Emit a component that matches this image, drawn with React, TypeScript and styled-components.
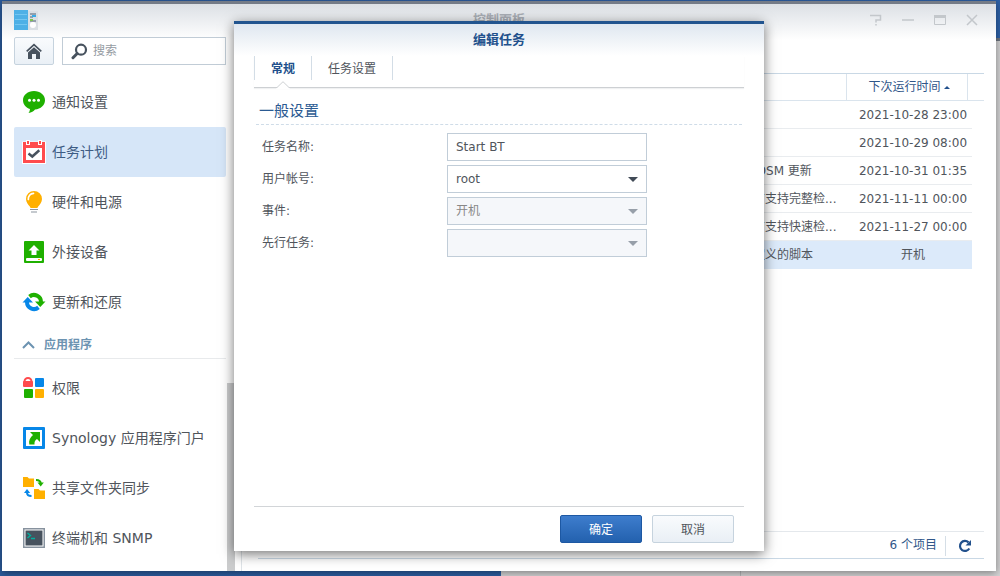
import React, { useState } from "react";
import styled, { createGlobalStyle, css } from "styled-components";

const GlobalStyle = createGlobalStyle`
  *, *::before, *::after { box-sizing: border-box; }
  body { margin: 0; }
  body, button, input, select, table {
    font-family: "DejaVu Sans", "Noto Sans CJK SC", sans-serif;
    font-size: 12px;
    line-height: 16px;
    color: #50555c;
  }
`;

const Desktop = styled.div`
  position: relative;
  display: flex;
  min-height: 100vh;
  padding: 1px 4px 5px 2px;
  overflow: hidden;
  background: linear-gradient(90deg, #2b5b9c, #2d61a8);
`;

const BackWindow = styled.div`
  position: absolute;
  top: 38px;
  right: -40px;
  bottom: 0;
  left: 501px;
  border-top: 3px solid #6e7580;
  background: #d3d3d4;
`;

const BackPanel = styled.div`
  height: 100%;
  margin-left: 239px;
  border-left: 1px solid #b4b6b8;
`;

const Window = styled.section`
  position: relative;
  display: flex;
  flex: 1;
  flex-direction: column;
  min-width: 0;
  border-top: 3px solid #747b87;
  background: #fff linear-gradient(#dce0e5, #fff 36px) no-repeat;
  box-shadow: 0 2px 8px rgba(0, 0, 0, 0.4);
`;

const TitleBar = styled.header`
  display: grid;
  grid-template-columns: 1fr auto 1fr;
  align-items: center;
  height: 33px;
  padding: 0 12px 2px;
`;

const WindowTitle = styled.h1`
  margin: 0;
  font-size: 13px;
  line-height: 20px;
  color: #a9aeb5;
`;

const WindowControls = styled.div`
  display: flex;
  justify-content: flex-end;
  gap: 8px;
`;

const ControlButton = styled.button`
  display: flex;
  align-items: center;
  justify-content: center;
  width: 24px;
  height: 24px;
  padding: 0;
  border: 0;
  background: none;
`;

const Body = styled.div`
  display: flex;
  flex: 1;
`;

const Sidebar = styled.aside`
  display: flex;
  flex: 0 0 233px;
  flex-direction: column;
  min-width: 0;
  padding-left: 12px;
`;

const Toolbar = styled.div`
  display: flex;
  gap: 8px;
  margin: 0 9px 12px 0;
`;

const HomeButton = styled.button`
  display: flex;
  flex: none;
  align-items: center;
  justify-content: center;
  width: 40px;
  height: 28px;
  padding: 0;
  border: 1px solid #c6d3de;
  border-radius: 2px;
  background: linear-gradient(#f9fbfd, #eaf0f6);
`;

const SearchBox = styled.label`
  display: flex;
  flex: 1;
  align-items: center;
  gap: 5px;
  min-width: 0;
  height: 28px;
  padding: 0 8px;
  border: 1px solid #c1ccd6;
  background: #fff;
`;

const SearchInput = styled.input`
  flex: 1;
  min-width: 0;
  padding: 0;
  border: 0;
  outline: 0;
  background: none;
  &::placeholder { color: #959ba2; opacity: 1; }
`;

const NavArea = styled.div`
  display: flex;
  flex: 1;
`;

const Nav = styled.nav`
  flex: 1;
  min-width: 0;
  padding-bottom: 8px;
`;

const NavLink = styled.a<{ $active?: boolean }>`
  display: flex;
  align-items: center;
  gap: 6px;
  height: 50px;
  padding-left: 8px;
  border-radius: 2px;
  font-size: 14px;
  line-height: 20px;
  text-decoration: none;
  white-space: nowrap;
  color: ${(p) => (p.$active ? "#3d5c84" : "#50555c")};
  background: ${(p) => (p.$active ? "#d6e6f8" : "transparent")};
`;

const GroupToggle = styled.button`
  display: flex;
  align-items: center;
  gap: 9px;
  width: 100%;
  height: 32px;
  margin-bottom: 4px;
  padding: 4px 8px 0;
  border: 0;
  border-bottom: 1px solid #e8eaec;
  background: none;
  font-weight: bold;
  color: #6c93b1;
`;

const ScrollRail = styled.div`
  display: flex;
  flex: 0 0 8px;
  align-items: flex-end;
  margin-left: 1px;
`;

const ScrollThumb = styled.div`
  width: 100%;
  height: 38%;
  background: #cbcccd;
`;

const Main = styled.main`
  display: flex;
  flex: 1;
  flex-direction: column;
  min-width: 0;
  margin-left: 6px;
  padding: 36px 12px 12px 16px;
  border-left: 1px solid #dfe4e8;
`;

const TaskTable = styled.table`
  width: 100%;
  table-layout: fixed;
  border-spacing: 0;
  border-top: 1px solid #c9d8e5;
`;

const Col = styled.col<{ $width?: number }>`
  ${(p) => p.$width && css`width: ${p.$width}px;`}
`;

const HeadCell = styled.th<{ $divided?: boolean }>`
  height: 27px;
  padding: 0 4px 0 8px;
  border-bottom: 1px solid #dae4ed;
  ${(p) => p.$divided && css`border-left: 1px solid #dae4ed;`}
  font-weight: normal;
  color: #2f5689;
`;

const SortArrow = styled.span`
  display: inline-block;
  margin-left: 3px;
  border: 3px solid transparent;
  border-top: 0;
  border-bottom: 3px solid #21508c;
  vertical-align: 2px;
`;

const TaskRow = styled.tr<{ $selected?: boolean }>`
  td {
    background: ${(p) => (p.$selected ? "#dceafa" : "transparent")};
    border-bottom: 1px solid ${(p) => (p.$selected ? "#dceafa" : "#e9ecef")};
  }
  td:last-child { background: none; border-bottom: 0; }
`;

const Cell = styled.td<{ $center?: boolean }>`
  height: 28px;
  padding: ${(p) => (p.$center ? "0 0 0 8px" : "0 0 0 7px")};
  text-align: ${(p) => (p.$center ? "center" : "left")};
  white-space: nowrap;
`;

const StatusBar = styled.footer`
  display: flex;
  align-items: center;
  justify-content: flex-end;
  height: 28px;
  margin-top: auto;
  border-top: 1px solid #e4e8ec;
  border-bottom: 1px solid #c9d8e5;
  color: #2f5689;
`;

const RefreshButton = styled.button`
  display: flex;
  align-items: center;
  justify-content: center;
  width: 39px;
  height: 20px;
  margin: 2px 0 0 8px;
  padding: 0;
  border: 0;
  border-left: 1px solid #d5dee6;
  background: none;
`;

const Overlay = styled.div`
  position: absolute;
  inset: 0;
  display: flex;
  justify-content: center;
  padding: 17px 0 20px;
`;

const Dialog = styled.div`
  display: flex;
  flex-direction: column;
  width: 530px;
  max-width: 100%;
  padding: 0 20px;
  border-top: 3px solid #21548f;
  background: #fff linear-gradient(#dfe7f0, #fff 32px) no-repeat;
  box-shadow: 0 3px 12px rgba(0, 0, 0, 0.55);
`;

const DialogTitle = styled.h2`
  margin: 0;
  padding: 6px 0;
  font-size: 13px;
  line-height: 20px;
  text-align: center;
  color: #21508c;
`;

const TabList = styled.div`
  display: flex;
  height: 32px;
  border-bottom: 1px solid #cdd0d3;
  box-shadow: 0 1px 1px #f0f1f2;
`;

const Tab = styled.button<{ $active?: boolean }>`
  position: relative;
  height: 24px;
  padding: 2px 16px 0;
  border: 0;
  border-left: 1px solid #d3dde6;
  background: none;
  font-weight: ${(p) => (p.$active ? "bold" : "normal")};
  color: ${(p) => (p.$active ? "#21508c" : "#50555c")};
  &:last-child { border-right: 1px solid #d3dde6; }
`;

const TabNotch = styled.svg`
  position: absolute;
  top: 25px;
  left: 50%;
  width: 14px;
  height: 8px;
  margin-left: -7px;
`;

const SectionTitle = styled.h3`
  margin: 12px 2px 8px;
  padding: 0 3px 2px;
  border-bottom: 1px dashed #cfdce8;
  font-size: 15px;
  font-weight: normal;
  line-height: 22px;
  color: #2a5a92;
`;

const Form = styled.form`
  display: flex;
  flex: 1;
  flex-direction: column;
  gap: 4px;
  padding: 0 8px;
`;

const Field = styled.div`
  display: grid;
  grid-template-columns: 185px 200px;
  align-items: center;
`;

const FieldLabel = styled.label`
  line-height: 16px;
`;

const controlStyle = css`
  width: 100%;
  height: 28px;
  padding: 0 8px;
  border: 1px solid #c1cdd8;
  border-radius: 0;
  outline: 0;
  background: #fff;
  color: #50555c;
`;

const TextInput = styled.input`
  ${controlStyle}
`;

const SelectWrap = styled.div<{ $disabled?: boolean }>`
  position: relative;
  &::after {
    content: "";
    position: absolute;
    top: 12px;
    right: 9px;
    border: 5px solid transparent;
    border-top-color: ${(p) => (p.$disabled ? "#979fa9" : "#414b57")};
    border-bottom: 0;
    pointer-events: none;
  }
`;

const Select = styled.select`
  ${controlStyle}
  display: block;
  appearance: none;
  &:disabled { background: #f5f7fa; color: #888; opacity: 1; }
`;

const DialogFooter = styled.div`
  display: flex;
  justify-content: flex-end;
  gap: 10px;
  padding: 8px 10px;
  border-top: 1px solid #d2d5d8;
`;

const ActionButton = styled.button<{ $primary?: boolean }>`
  width: 82px;
  height: 28px;
  padding: 2px 0 0;
  border: 1px solid ${(p) => (p.$primary ? "#1d58a3" : "#c6d3de")};
  border-radius: 2px;
  background: ${(p) =>
    p.$primary
      ? "linear-gradient(#3e7dcd, #2361ae)"
      : "linear-gradient(#f9fbfd, #e9eff5)"};
  color: ${(p) => (p.$primary ? "#fff" : "#50555c")};
`;

const Icon = ({ children }: { children: React.ReactNode }) => (
  <svg width="24" height="24" viewBox="0 0 24 24" aria-hidden="true">
    {children}
  </svg>
);

const ChatIcon = () => (
  <Icon>
    <path d="M12 1C5.800 1 1 5 1 10.200c0 4.300 3 7.500 7 8.700-.2 2-.8 3.200-1.500 4 3-.4 5.300-1.700 6.500-3.500C18.700 19 23 15.300 23 10.200 23 5 18.200 1 12 1z" fill="#1fb000" />
    <g fill="#fff"><circle cx="7.500" cy="10.300" r="1.500" /><circle cx="12" cy="10.300" r="1.500" /><circle cx="16.500" cy="10.300" r="1.500" /></g>
  </Icon>
);

const CalendarIcon = () => (
  <Icon>
    <path d="M0 1.500h24V24H0z" fill="#fff" />
    <path d="M1 2h22v21H1z" fill="#ff4b4d" />
    <path d="M4 8h16v12H4z" fill="#fff" />
    <path d="M4 0h4v5H4zM16 0h4v5h-4z" fill="#fff" />
    <path d="M5 1h2v3H5zM17 1h2v3h-2z" fill="#ff4b4d" />
    <path d="M6.500 13.500l3.800 3 7-6.200" fill="none" stroke="#47525e" strokeWidth="2.500" />
  </Icon>
);

const BulbIcon = () => (
  <Icon>
    <path d="M12 1a8 8 0 0 0-8 8c0 3.500 2.300 5.500 3.600 7.300.6.800.8 1.700 1.200 1.700h6.400c.4 0 .6-.9 1.200-1.700C17.700 14.500 20 12.500 20 9a8 8 0 0 0-8-8z" fill="#ffb000" />
    <path d="M6.300 9.500C6 6 8.300 3.600 11.500 3.400" fill="none" stroke="#fff" strokeWidth="1.700" strokeLinecap="round" />
    <path d="M8 19.500h8M9 22h6" stroke="#8c96a0" strokeWidth="1.200" />
  </Icon>
);

const DriveIcon = () => (
  <Icon>
    <rect x="2" y="1" width="20" height="22" rx="1" fill="#1fb000" />
    <path d="M12 5l5.500 5.500h-3V15h-5v-4.500h-3z" fill="#fff" />
    <rect x="4" y="18" width="16" height="3" rx="1" fill="#fff" />
    <path d="M16 19h2v1h-2z" fill="#ffb000" />
  </Icon>
);

const SyncIcon = () => (
  <Icon>
    <path d="M7.500 6.600A7 7 0 0 1 19 12" fill="none" stroke="#1fb000" strokeWidth="4" />
    <path d="M13 11.500H23.500L18.300 17z" fill="#1fb000" />
    <path d="M16.500 17.400A7 7 0 0 1 5 12" fill="none" stroke="#0787e8" strokeWidth="4" />
    <path d="M11 12.500H.5L5.700 7z" fill="#0787e8" />
  </Icon>
);

const PrivilegeIcon = () => (
  <Icon>
    <path d="M2.500 7V5.500a3.500 3.500 0 0 1 7 0V7" fill="none" stroke="#ff4b4d" strokeWidth="2" />
    <rect x="1" y="5" width="10" height="6" rx="1" fill="#ff4b4d" />
    <rect x="13" y="2" width="9" height="9" rx="1" fill="#0787e8" />
    <rect x="2" y="13" width="9" height="9" rx="1" fill="#1fb000" />
    <rect x="13" y="13" width="9" height="9" rx="1" fill="#ffb000" />
  </Icon>
);

const PortalIcon = () => (
  <Icon>
    <rect x="1" y="1" width="22" height="22" rx="1" fill="#0787e8" />
    <path d="M4 4h16v16H4z" fill="#fff" />
    <path d="M8 6h10v10l-3-3c-2 1.200-2.700 2.800-2.500 5.500H7.300C6.500 14.500 8 11.500 11 9z" fill="#1fb000" />
  </Icon>
);

const FolderSyncIcon = () => (
  <Icon>
    <path d="M1 1h4.500l1.500 1.500h5V11H1zM12 13h4.500l1.500 1.500h5V23H12z" fill="#ffb000" />
    <path d="M14 4c3 0 4.700 1 4.700 3.500" fill="none" stroke="#1fb000" strokeWidth="2" />
    <path d="M15.500 6.500h6.300L18.700 10.500z" fill="#1fb000" />
    <path d="M9.500 20c-3 0-4.500-1-4.500-3.500" fill="none" stroke="#0787e8" strokeWidth="2" />
    <path d="M2 17h6.200L5 13z" fill="#0787e8" />
  </Icon>
);

const TerminalIcon = () => (
  <Icon>
    <path d="M1 2h22v20H1z" fill="#87929e" />
    <path d="M2.500 3.500h19v17h-19z" fill="#fff" />
    <path d="M3.500 4.500h17v15h-17z" fill="#47525e" />
    <path d="M5.500 7l3 2.500-3 2.500M9 12.500h4" fill="none" stroke="#00b0a0" strokeWidth="1.400" />
  </Icon>
);

const PanelIcon = () => (
  <svg width="24" height="20" viewBox="0 0 24 20" aria-hidden="true">
    <path d="M0 0h14v20H0z" fill="#4eb0e6" />
    <path d="M1 4.500h12M1 9.500h12M1 14.500h12" stroke="#74c6f1" />
    <path d="M14 1h10v19H14z" fill="#dadfe4" />
    <path d="M16 4h6M16 7h3M16 11h6" stroke="#7d8b99" strokeWidth="1.300" />
    <path d="M18 6h4" stroke="#38abe8" strokeWidth="2" />
    <path d="M16 10h3" stroke="#7cc24f" strokeWidth="2" />
    <circle cx="19" cy="15" r="3" fill="#fff" />
  </svg>
);

const topItems = [
  { label: "通知设置", icon: <ChatIcon /> },
  { label: "任务计划", icon: <CalendarIcon />, active: true },
  { label: "硬件和电源", icon: <BulbIcon /> },
  { label: "外接设备", icon: <DriveIcon /> },
  { label: "更新和还原", icon: <SyncIcon /> },
];

const appItems = [
  { label: "权限", icon: <PrivilegeIcon /> },
  { label: "Synology 应用程序门户", icon: <PortalIcon /> },
  { label: "共享文件夹同步", icon: <FolderSyncIcon /> },
  { label: "终端机和 SNMP", icon: <TerminalIcon /> },
];

const tasks = [
  { action: "", next: "2021-10-28 23:00" },
  { action: "", next: "2021-10-29 08:00" },
  { action: "自动 DSM 更新", next: "2021-10-31 01:35" },
  { action: "对所有支持完整检...", next: "2021-11-11 00:00" },
  { action: "对所有支持快速检...", next: "2021-11-27 00:00" },
  { action: "用户定义的脚本", next: "开机", selected: true },
];

export default function App() {
  const [name, setName] = useState("Start BT");

  return (
    <>
      <GlobalStyle />
      <Desktop>
        <BackWindow aria-hidden="true"><BackPanel /></BackWindow>
        <Window>
          <TitleBar>
            <PanelIcon />
            <WindowTitle>控制面板</WindowTitle>
            <WindowControls>
              <ControlButton aria-label="帮助">
                <svg width="12" height="12" viewBox="0 0 12 12"><path d="M0 1.500h10.500v4.500H6v2.500M6 10v1.500" fill="none" stroke="#c3c7cb" strokeWidth="1.500" /></svg>
              </ControlButton>
              <ControlButton aria-label="最小化">
                <svg width="12" height="12" viewBox="0 0 12 12"><path d="M0 6h12" stroke="#c3c7cb" strokeWidth="1.500" /></svg>
              </ControlButton>
              <ControlButton aria-label="最大化">
                <svg width="12" height="12" viewBox="0 0 12 12"><path d="M.5 2v8.500h11V2" fill="none" stroke="#c3c7cb" /><path d="M0 1h12v3H0z" fill="#c3c7cb" /></svg>
              </ControlButton>
              <ControlButton aria-label="关闭">
                <svg width="12" height="12" viewBox="0 0 12 12"><path d="M1 1l10 10M11 1L1 11" stroke="#c3c7cb" strokeWidth="1.500" /></svg>
              </ControlButton>
            </WindowControls>
          </TitleBar>

          <Body>
            <Sidebar>
              <Toolbar>
                <HomeButton aria-label="主页">
                  <svg width="16" height="16" viewBox="0 0 16 16"><path d="M8 4.200l6 5.300V16h-4v-5H6v5H2V9.500z" fill="#47525e" /><path d="M.7 8.300L8 1.600l7.300 6.700" fill="none" stroke="#47525e" strokeWidth="1.700" /></svg>
                </HomeButton>
                <SearchBox>
                  <svg width="17" height="17" viewBox="0 0 17 17" aria-hidden="true"><circle cx="10" cy="6.700" r="5" fill="none" stroke="#47525e" strokeWidth="2.200" /><path d="M6.200 10.500L2 14.700" stroke="#47525e" strokeWidth="3" strokeLinecap="round" /></svg>
                  <SearchInput placeholder="搜索" aria-label="搜索" />
                </SearchBox>
              </Toolbar>
              <NavArea>
                <Nav>
                  {topItems.map((item) => (
                    <NavLink key={item.label} href="#" $active={item.active}>
                      {item.icon}
                      {item.label}
                    </NavLink>
                  ))}
                  <GroupToggle aria-expanded="true">
                    <svg width="13" height="8" viewBox="0 0 13 8" aria-hidden="true"><path d="M1 7l5.500-5.500L12 7" fill="none" stroke="#6c93b1" strokeWidth="2" /></svg>
                    应用程序
                  </GroupToggle>
                  {appItems.map((item) => (
                    <NavLink key={item.label} href="#">
                      {item.icon}
                      {item.label}
                    </NavLink>
                  ))}
                </Nav>
                <ScrollRail><ScrollThumb /></ScrollRail>
              </NavArea>
            </Sidebar>

            <Main>
              <TaskTable>
                <colgroup>
                  <Col />
                  <Col $width={124} />
                  <Col $width={121} />
                  <Col $width={5} />
                  <Col $width={12} />
                </colgroup>
                <thead>
                  <tr>
                    <HeadCell />
                    <HeadCell />
                    <HeadCell $divided>下次运行时间<SortArrow /></HeadCell>
                    <HeadCell $divided colSpan={2} />
                  </tr>
                </thead>
                <tbody>
                  {tasks.map((task) => (
                    <TaskRow key={task.next} $selected={task.selected}>
                      <Cell />
                      <Cell>{task.action}</Cell>
                      <Cell $center colSpan={2}>{task.next}</Cell>
                      <Cell />
                    </TaskRow>
                  ))}
                </tbody>
              </TaskTable>
              <StatusBar>
                6 个项目
                <RefreshButton aria-label="刷新">
                  <svg width="14" height="14" viewBox="0 0 14 14"><path d="M11.300 9.500A5 5 0 1 1 10.500 3.400" fill="none" stroke="#21508c" strokeWidth="2.200" /><path d="M13 1v5.500H7.500z" fill="#21508c" /></svg>
                </RefreshButton>
              </StatusBar>
            </Main>
          </Body>

          <Overlay>
            <Dialog role="dialog" aria-labelledby="dialog-title">
              <DialogTitle id="dialog-title">编辑任务</DialogTitle>
              <TabList role="tablist">
                <Tab role="tab" aria-selected="true" $active>
                  常规
                  <TabNotch viewBox="0 0 14 8" aria-hidden="true">
                    <path d="M0 8L1 6.500 7 .5l6 6L14 8z" fill="#fff" />
                    <path d="M0 6.500h1L7 .7l6 5.800h1" fill="none" stroke="#cdd0d3" />
                  </TabNotch>
                </Tab>
                <Tab role="tab" aria-selected="false">任务设置</Tab>
              </TabList>
              <SectionTitle>一般设置</SectionTitle>
              <Form id="task-form" onSubmit={(e) => e.preventDefault()}>
                <Field>
                  <FieldLabel htmlFor="task-name">任务名称:</FieldLabel>
                  <TextInput id="task-name" value={name} onChange={(e) => setName(e.target.value)} />
                </Field>
                <Field>
                  <FieldLabel htmlFor="task-user">用户帐号:</FieldLabel>
                  <SelectWrap>
                    <Select id="task-user"><option>root</option></Select>
                  </SelectWrap>
                </Field>
                <Field>
                  <FieldLabel htmlFor="task-event">事件:</FieldLabel>
                  <SelectWrap $disabled>
                    <Select id="task-event" disabled><option>开机</option></Select>
                  </SelectWrap>
                </Field>
                <Field>
                  <FieldLabel htmlFor="task-before">先行任务:</FieldLabel>
                  <SelectWrap $disabled>
                    <Select id="task-before" disabled><option /></Select>
                  </SelectWrap>
                </Field>
              </Form>
              <DialogFooter>
                <ActionButton type="submit" form="task-form" $primary>确定</ActionButton>
                <ActionButton type="button">取消</ActionButton>
              </DialogFooter>
            </Dialog>
          </Overlay>
        </Window>
      </Desktop>
    </>
  );
}
